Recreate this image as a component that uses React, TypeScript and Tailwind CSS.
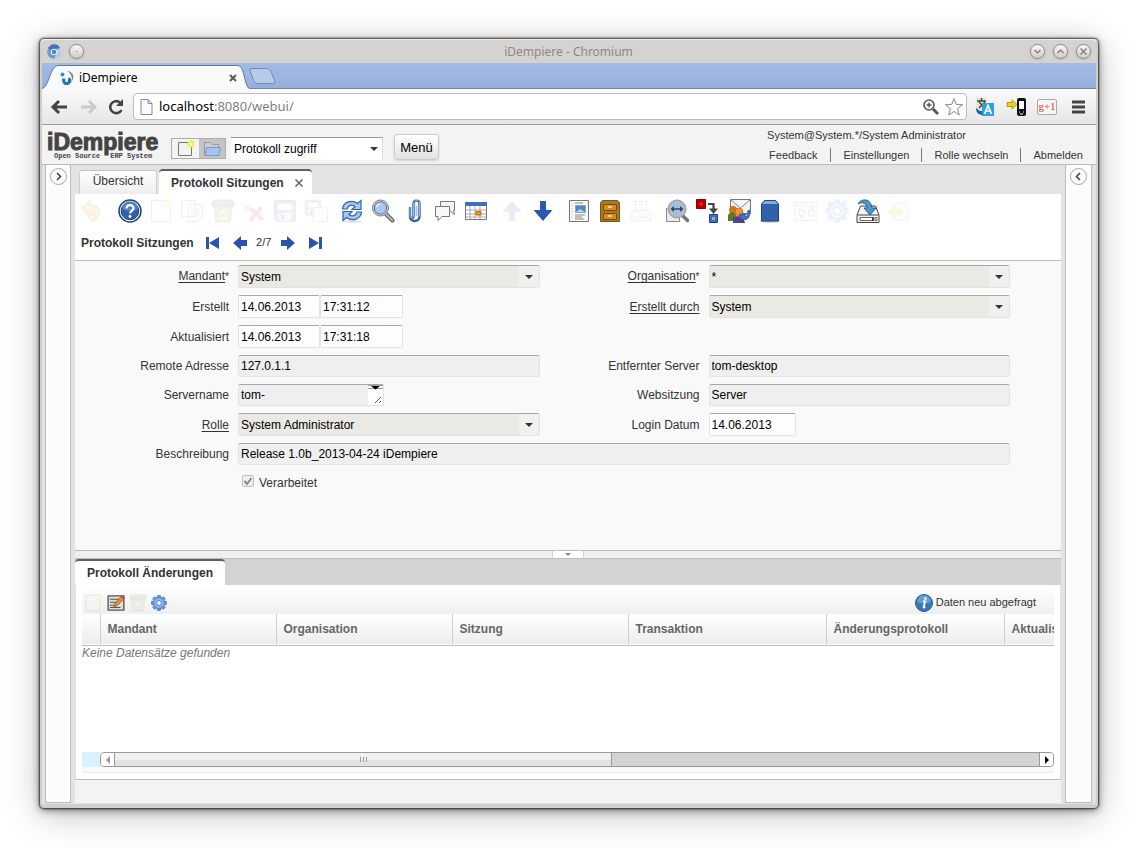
import type { ReactNode } from "react";

type IconProps = { children: ReactNode; dim?: boolean };

function Pic({ children, dim }: IconProps) {
  return (
    <svg viewBox="0 0 24 24" aria-hidden="true" className={dim ? "size-6 shrink-0 opacity-10" : "size-6 shrink-0"}>
      {children}
    </svg>
  );
}

const arrowRight = "M2 9h9V2.500l11 9.500-11 9.500V15H2z";

const page = <path d="M2.500 1.500h19v21h-19z" fill="#f4f4f4" stroke="#777" />;
const sparkle = (
  <>
    <circle cx="19" cy="5" r="4.500" fill="#f5e50a" />
    <circle cx="19" cy="5" r="2" fill="#fff" />
  </>
);
const floppy = (
  <>
    <path d="M1.500 2.500q0-1 1-1h19q1 0 1 1v19q0 1-1 1h-17l-3-3z" fill="#5580d8" stroke="#2c4a90" />
    <path d="M5 2h14v9H5z" fill="#fff" />
    <path d="M5 2h14v2.500H5z" fill="#e02020" />
    <path d="M6 14h12v8H6z" fill="#ddd" />
    <path d="M8 15.500h3v5H8z" fill="#444" />
  </>
);
const bin = (
  <>
    <path d="M3 7h18l-1.500 16h-15z" fill="#8fa848" stroke="#5e7a22" />
    <path d="M1.500 2.500q0-1.500 2-1.500h17q2 0 2 1.500V7h-21z" fill="#6a6f55" stroke="#3c4430" />
    <path d="M9 16l3-5 3 5m-7 3h8" fill="none" stroke="#fff" strokeWidth="1.500" />
  </>
);
const gearTeeth = [0, 45, 90, 135, 180, 225, 270, 315];
const gear = (
  <>
    {gearTeeth.map((a) => (
      <rect key={a} x="9.500" y="0.800" width="5" height="6" rx="1" fill="#6d9ee4" stroke="#2a62b8" transform={`rotate(${a} 12 12)`} />
    ))}
    <circle cx="12" cy="12" r="8" fill="#8db4ee" stroke="#2a62b8" />
    <circle cx="12" cy="12" r="7.200" fill="#8db4ee" />
    <circle cx="12" cy="12" r="3.500" fill="#fff" stroke="#2a62b8" />
  </>
);

type Tool = { name: string; dim?: boolean; art: ReactNode };

const toolGroups: Tool[][] = [
  [
    {
      name: "Zurücknehmen",
      dim: true,
      art: <path d="M3 9l8-7v4c7 0 10 4 9 8-.500 4-3 7-7 8 3-4 3-8-2-8v4z" fill="#f0b000" stroke="#b08000" strokeWidth="2" />,
    },
  ],
  [
    {
      name: "Hilfe",
      art: (
        <>
          <circle cx="12" cy="12" r="11" fill="#fff" stroke="#1d4483" strokeWidth="1.500" />
          <circle cx="12" cy="12" r="8.800" fill="#2f62ab" stroke="#1d4483" />
          <path d="M4 10a8 8 0 0 1 16 0q-8 4-16 0z" fill="#6c95cf" opacity=".6" />
          <path d="M8.500 9.500c0-4.500 7-4.500 7-.300 0 2.500-3.400 2.500-3.400 5.300" fill="none" stroke="#fff" strokeWidth="2.200" />
          <circle cx="12" cy="17.500" r="1.400" fill="#fff" />
        </>
      ),
    },
    { name: "Neu", dim: true, art: <>{page}{sparkle}</> },
    {
      name: "Kopieren",
      dim: true,
      art: (
        <>
          <path d="M1.500 1.500h14v16h-14zM8.500 5.500h14v13l-4 4h-10z" fill="#f4f4f4" stroke="#777" />
          <path d="M11 10h9M11 13h9M11 16h9" stroke="#999" />
        </>
      ),
    },
    { name: "Löschen", dim: true, art: bin },
    {
      name: "Auswahl löschen",
      dim: true,
      art: (
        <>
          <path d="M8 9l13 12M20 8L8 22" stroke="#e02020" strokeWidth="3.500" />
          <path d="M2 6l6 6M8 6l-6 6" stroke="#e02020" />
        </>
      ),
    },
    { name: "Speichern", dim: true, art: floppy },
    {
      name: "Speichern und neu",
      dim: true,
      art: (
        <>
          <g transform="scale(.75)">{floppy}</g>
          <path d="M9.500 8.500h14v14h-14z" fill="#fff" stroke="#777" />
          <circle cx="21" cy="10" r="3" fill="#f5e50a" />
        </>
      ),
    },
  ],
  [
    {
      name: "Aktualisieren",
      art: (
        <>
          <ellipse cx="12" cy="22.500" rx="10" ry="1.200" fill="#ddd" />
          <path d="M2.500 10C3 3 12 0 17.500 4.500L21 1.500v9h-9l3-3C12 5 8 6 7 10z" fill="#a9c7ee" stroke="#2f64ab" strokeWidth="1.200" />
          <path d="M21.500 13C21 20 12 23 6.500 18.500L3 21.500v-9h9l-3 3c3 2.500 7 1.500 8-2.500z" fill="#a9c7ee" stroke="#2f64ab" strokeWidth="1.200" />
        </>
      ),
    },
    {
      name: "Suchen",
      art: (
        <>
          <path d="M14.500 14.500l7 7" stroke="#555" strokeWidth="4" strokeLinecap="round" />
          <path d="M14.500 14.500l7 7" stroke="#bbb" strokeWidth="2" strokeLinecap="round" />
          <circle cx="9.500" cy="9" r="8" fill="#ddd" stroke="#777" />
          <circle cx="9.500" cy="9" r="6.200" fill="#a6c8f2" stroke="#668" />
          <path d="M5 9a4.500 4.500 0 0 1 5-4.500C7 6 6 8 5 9z" fill="#fff" />
        </>
      ),
    },
    {
      name: "Anhang",
      art: (
        <>
          <path d="M8 8v9.500c0 2 3.500 2 3.500 0V5c0-4.500 6-4.500 6 0v12.500c0 6-9.500 6-9.500 0" fill="none" stroke="#2f5f9f" strokeWidth="2.400" />
          <path d="M14.500 7v10" stroke="#a9c7ee" strokeWidth="2" />
          <path d="M8 8v9.500c0 2 3.500 2 3.500 0V5c0-4.500 6-4.500 6 0v12.500" fill="none" stroke="#b5d0f0" strokeWidth=".8" />
        </>
      ),
    },
    {
      name: "Chat",
      art: (
        <>
          <path d="M7.500 2.500h14v9h-1l1 4-5-4h-9z" fill="#f3f3f3" stroke="#777" />
          <path d="M2.500 7.500h14v10H9l-4 4v-4H2.500z" fill="#f8f8f8" stroke="#777" />
        </>
      ),
    },
    {
      name: "Tabellenansicht",
      art: (
        <>
          <path d="M1.500 3.500h21v17h-21z" fill="#fff" stroke="#777" />
          <path d="M1 3h22v4H1z" fill="#3f70b8" />
          <path d="M2 11h20M2 15h20M2 18h20M6 7v13M11 7v13M16 7v13" stroke="#999" strokeWidth=".8" />
          <path d="M12 12.500h5v3.500h-5z" fill="#f59a20" stroke="#d05a00" />
        </>
      ),
    },
  ],
  [
    { name: "Übergeordnet", dim: true, art: <path d={arrowRight} fill="#2b57ae" transform="rotate(-90 12 12)" /> },
    { name: "Detail", art: <path d={arrowRight} fill="#2b57ae" transform="rotate(90 12 12)" /> },
  ],
  [
    {
      name: "Bericht",
      art: (
        <>
          <path d="M2.500 1.500h19v21h-19z" fill="#f7f7f7" stroke="#777" />
          <path d="M5 3v18" stroke="#bbb" strokeDasharray="1 2" />
          <path d="M8.500 6.500h10v7h-10z" fill="#4d87d0" stroke="#8aa" />
          <path d="M9 13l4-3 5 3z" fill="#b5d4f0" />
          <path d="M8 4h8M8 16h10M8 18h7M8 20h9" stroke="#888" />
        </>
      ),
    },
    {
      name: "Archiv",
      art: (
        <>
          <path d="M2.500 3.500l2-2h15l2 2v19h-19z" fill="#a87a20" stroke="#6b5a20" />
          <path d="M5.500 5.500h13v6h-13zM5.500 14.500h13v6h-13z" fill="#dc8a18" stroke="#7a4a00" />
          <path d="M10 8h4M10 17h4" stroke="#ffe8b8" strokeWidth="1.400" />
        </>
      ),
    },
    {
      name: "Drucken",
      dim: true,
      art: (
        <>
          <path d="M6.500 2.500h11v9h-11z" fill="#fff" stroke="#777" />
          <path d="M2 16l3-5h14l3 5v6H2z" fill="#ddd" stroke="#777" />
          <path d="M12 4v6M9.500 6.500L12 4l2.500 2.500M5 18h14" stroke="#777" fill="none" />
        </>
      ),
    },
  ],
  [
    {
      name: "Zoom",
      art: (
        <>
          <path d="M1.500 9v13.500h13V16" fill="#ececec" stroke="#888" />
          <path d="M18 17l4.500 4.500" stroke="#777" strokeWidth="3.500" strokeLinecap="round" />
          <circle cx="12" cy="10" r="9" fill="#b5b5b5" stroke="#999" />
          <circle cx="12" cy="10" r="7.500" fill="#a4bedc" />
          <path d="M5.500 10l3.500-3v2.200h6V7l3.500 3-3.500 3v-2.200H9V13z" fill="#2d4a6c" />
        </>
      ),
    },
    {
      name: "Prozess",
      art: (
        <>
          <path d="M.5.5h9v9h-9z" fill="#b80000" stroke="#800" />
          <path d="M3.500 3.500h3v3h-3z" fill="#e22" />
          <path d="M12 5h5.500v5" fill="none" stroke="#444" strokeWidth="2.200" />
          <path d="M13 9.500h9L17.500 15z" fill="#444" />
          <path d="M13.500 15.500h8v8h-8z" fill="#3f70b8" stroke="#1d4483" />
          <path d="M16 18h3v3h-3z" fill="#83aee8" />
        </>
      ),
    },
    {
      name: "Anfragen",
      art: (
        <>
          <path d="M3.500.500h20v14h-20z" fill="#f4f4f4" stroke="#777" />
          <path d="M4 1l9.500 8L23 1" fill="none" stroke="#888" />
          <circle cx="6" cy="11" r="4" fill="#d07818" />
          <path d="M1 16q4-6 8 0v6H1z" fill="#5c7a20" />
          <circle cx="12" cy="13" r="4" fill="#f59430" stroke="#a85b10" strokeWidth=".6" />
          <path d="M6 24v-5l4-2 6 1 2 6z" fill="#703080" />
          <path d="M6 24l1-5 6 5z" fill="#2b57ae" />
          <path d="M22.500 11c2 7-3 12-8 9l-1 3-1-8 7 0-2 2c3 1 4-2 3-5z" fill="#3f70c8" stroke="#1d4483" strokeWidth=".6" />
        </>
      ),
    },
    {
      name: "Produktinfo",
      art: (
        <>
          <ellipse cx="12" cy="22.200" rx="10" ry="1.500" fill="#bbb" />
          <path d="M3.500 5l3-3.500h11l3 3.500v17h-17z" fill="#2f62ab" stroke="#1d4483" />
          <path d="M4 5l3-3h10l3 3z" fill="#86acdf" />
        </>
      ),
    },
  ],
  [
    {
      name: "Anpassen",
      dim: true,
      art: (
        <>
          <path d="M1 3.500h22v18H1zM1 7h22" fill="#f8f8f8" stroke="#888" />
          <path d="M5 11h5v5H5zM15 11h5v6h-5zM6 18h4M16 9h3" fill="none" stroke="#555" />
        </>
      ),
    },
    { name: "Prozesse", dim: true, art: gear },
    {
      name: "Export",
      art: (
        <>
          <path d="M1 16l3.500-9h15l3.500 9v7.500H1z" fill="#f3f3f3" stroke="#444" />
          <path d="M1.500 16h21" stroke="#444" />
          <path d="M4 18.500h13v3H4zM19 18.500h2v3h-2z" fill="#fff" stroke="#666" />
          <path d="M17 18v4" stroke="#222" strokeWidth="1.500" />
          <path d="M2 5C5-1 15-1 16 9h4l-6 7-6-7h3c0-4-4-7-9-4z" fill="#4d97cc" stroke="#1f5f94" />
        </>
      ),
    },
    {
      name: "Import",
      dim: true,
      art: (
        <>
          <path d="M6 4h12l3 3v14H6z" fill="#eee" stroke="#999" />
          <path d="M1 12l7-6v4h7v5H8v4z" fill="#d0d800" stroke="#b0b800" />
        </>
      ),
    },
  ],
];

function Caret() {
  return (
    <svg viewBox="0 0 8 4" aria-hidden="true" className="h-1 w-2">
      <path d="M0 0h8L4 4z" fill="#333" />
    </svg>
  );
}

const edge = "border border-t-[#a8a8a8] border-x-[#e3e3e3] border-b-[#e3e3e3] rounded-[2px]";

function Combo({ id, value }: { id: string; value: string }) {
  return (
    <div className="relative h-[23px]">
      <select id={id} defaultValue={value} className={`${edge} h-full w-full appearance-none bg-[#ebe9e4] pl-[2px] pr-6 text-black`}>
        <option>{value}</option>
      </select>
      <span className="pointer-events-none absolute inset-y-px right-px flex w-5 items-center justify-center bg-[#f0f0f0]">
        <Caret />
      </span>
    </div>
  );
}

function Field({ id, value }: { id: string; value: string }) {
  return <input id={id} readOnly defaultValue={value} className={`${edge} h-[22px] w-full bg-[#efefef] px-[2px] text-black`} />;
}

function DateField({ id, value, label, width }: { id: string; value: string; label?: string; width: string }) {
  return <input id={id} aria-label={label} defaultValue={value} className={`${edge} ${width} h-[23px] bg-white/60 px-[2px] text-black`} />;
}

function Label({ id, children, link, star }: { id: string; children: ReactNode; link?: boolean; star?: boolean }) {
  return (
    <label htmlFor={id} className="self-center text-right leading-5">
      <span className={link ? "underline underline-offset-2" : ""}>{children}</span>
      {star && <span className="text-[10px]">*</span>}
    </label>
  );
}

function WindowButton({ d, label }: { d: string; label: string }) {
  return (
    <button aria-label={label} className="size-[15px] rounded-full border border-[#8d8a87] bg-linear-to-b from-[#fafafa] to-[#cfcbc8] shadow-sm">
      <svg viewBox="0 0 13 13" className="size-full">
        <path d={d} fill="none" stroke="#777" strokeWidth="1.200" />
      </svg>
    </button>
  );
}

function SideBar({ label, d }: { label: string; d: string }) {
  return (
    <aside className="flex w-[26px] shrink-0 flex-col items-center border-x border-b border-[#bdbdbd] bg-[#fcfcfc] pt-[3px] last:w-[27px]">
      <button aria-label={label} className="size-[17px] rounded-full border border-[#9fa8ae] bg-white">
        <svg viewBox="0 0 15 15" className="size-full">
          <path d={d} fill="none" stroke="#444" strokeWidth="1.600" />
        </svg>
      </button>
    </aside>
  );
}

function TitleBar() {
  return (
    <header className="flex h-6 items-center rounded-t-[4px] border-t border-[#f2f0ee] bg-[#d6d2cf] px-1">
      <div className="flex flex-1 items-center gap-[7px]">
        <svg viewBox="0 0 16 16" aria-hidden="true" className="size-4">
          <circle cx="8" cy="8" r="6.800" fill="#6a9ad4" />
          <path d="M8 8L2 4a7 7 0 0 1 12-.500L8 5z" fill="#3f74b8" />
          <path d="M8 8l6-4a7 7 0 0 1-6 11l3-6z" fill="#b2cdee" />
          <circle cx="8" cy="8" r="3.200" fill="#e6effa" />
          <circle cx="8" cy="8" r="2.200" fill="#4d84c8" />
        </svg>
        <WindowButton label="Menü des Fensters" d="M6 6.500h1" />
      </div>
      <h1 className="font-['Noto_Sans',sans-serif] text-[12px] text-[#8b8886]">iDempiere - Chromium</h1>
      <div className="flex flex-1 justify-end gap-2 pr-px">
        <WindowButton label="Minimieren" d="M3.500 5l3 3 3-3" />
        <WindowButton label="Maximieren" d="M3.500 8l3-3 3 3" />
        <WindowButton label="Schließen" d="M3.500 3.500l6 6m0-6l-6 6" />
      </div>
    </header>
  );
}

function BrowserTabs() {
  return (
    <div className="flex h-[26px] border-b border-[#6f87ae] bg-linear-to-b from-[#a4bce3] to-[#96aedb] font-['Noto_Sans',sans-serif]">
      <div className="relative h-[26px] w-[208px]">
        <svg viewBox="0 0 210 26" preserveAspectRatio="none" aria-hidden="true" className="absolute inset-0 size-full">
          <path d="M0 25.500C7 25 8 3 16 2.500h182c7 0 6 23 12 23V26H0z" fill="#fafafa" />
          <path d="M0 25.500C7 25 8 3 16 2.500h182c7 0 6 23 12 23" fill="none" stroke="#5f77a4" />
        </svg>
        <div className="relative flex h-full items-center pl-[17px] pr-2 pt-[3px] text-[12px] text-black">
          <svg viewBox="0 0 16 16" aria-hidden="true" className="mr-1 size-4">
            <circle cx="3.500" cy="4.500" r="2" fill="#18a0d8" />
            <path d="M3 8.500h3.500c-1.500 4 2 4.500 2.500 2 .500-1.500-.500-2.500 1-3 3 .500 3 5 0 7-4 1.500-7 0-7-6z" fill="#1878b8" />
            <path d="M8 1c6 .500 9 6 3.500 12C14 9 13 4 8 1z" fill="#888" />
          </svg>
          <span>iDempiere</span>
          <button aria-label="Tab schließen" className="ml-auto mr-[3px] size-3">
            <svg viewBox="0 0 12 12" className="size-full">
              <path d="M3 3l6 6m0-6L3 9" stroke="#555" strokeWidth="1.800" />
            </svg>
          </button>
        </div>
      </div>
      <button aria-label="Neuer Tab" className="-ml-px mt-[5px] h-4 w-7">
        <svg viewBox="0 0 28 16" className="size-full">
          <path d="M1.500.500h16c3 0 5 3 8 12 .500 2 0 3-2 3H9c-4 0-5-4-8-13q-.500-2 .500-2z" fill="#b6caea" stroke="#7188b4" />
        </svg>
      </button>
    </div>
  );
}

function AddressBar() {
  return (
    <div className="flex h-9 items-center border-b border-[#a0a0a0] bg-linear-to-b from-[#fafafa] to-[#e6e6e6] px-2">
      <button aria-label="Zurück" className="mr-2 size-5">
        <svg viewBox="0 0 20 20"><path d="M9 4l-6 6 6 6M3.500 10H17" fill="none" stroke="#444" strokeWidth="3" /></svg>
      </button>
      <button aria-label="Vorwärts" className="mr-2 size-5">
        <svg viewBox="0 0 20 20"><path d="M11 4l6 6-6 6M16.500 10H3" fill="none" stroke="#ccc" strokeWidth="3" /></svg>
      </button>
      <button aria-label="Neu laden" className="mr-[7px] size-5">
        <svg viewBox="0 0 20 20">
          <path d="M15.500 13A6 6 0 1 1 14 5.500" fill="none" stroke="#444" strokeWidth="2.600" />
          <path d="M17 2v7h-7z" fill="#444" />
        </svg>
      </button>
      <div className="flex h-[27px] min-w-0 flex-1 items-center rounded-[4px] border border-[#bcbcbc] bg-white pl-[6px] pr-[2px] font-['Noto_Sans',sans-serif] text-[13px]">
        <svg viewBox="0 0 13 16" aria-hidden="true" className="mr-[6px] h-4 w-[13px]">
          <path d="M1 .500h7l4 4v11H1z" fill="#fafafa" stroke="#888" />
          <path d="M8 .500v4h4" fill="none" stroke="#888" />
        </svg>
        <a href="#webui" className="flex-1 text-[#808080]"><span className="text-black">localhost</span>:8080/webui/</a>
        <button aria-label="Zoom" className="mr-1 size-[18px]">
          <svg viewBox="0 0 18 18">
            <circle cx="7" cy="7" r="5" fill="none" stroke="#555" strokeWidth="1.600" />
            <path d="M4.500 7h5M7 4.500v5" stroke="#555" strokeWidth="1.400" />
            <path d="M11 11l5 5" stroke="#555" strokeWidth="2.800" />
          </svg>
        </button>
        <button aria-label="Lesezeichen" className="size-5">
          <svg viewBox="0 0 20 20"><path d="M10 1.500l2.300 5.900 6.200.300-4.900 4 1.700 6.300-5.300-3.600L4.700 18l1.700-6.300-4.900-4 6.200-.300z" fill="#fff" stroke="#888" /></svg>
        </button>
      </div>
      <button aria-label="Übersetzen" className="ml-2 size-5">
        <svg viewBox="0 0 20 20">
          <path d="M1 1h10v12H1z" fill="#eee6c8" />
          <path d="M2 4h9M6.500 1v3M4 5l6 6M10 5l-6 6" stroke="#444" strokeWidth="1.500" />
          <path d="M1 11c0 5 3 7 7 7v-4H5z" fill="#1763b8" />
          <path d="M7 6h12v13H7z" fill="#2f9fe8" />
          <path d="M9.500 17L13 8.500l3.500 8.500M10.800 14h4.400" fill="none" stroke="#fff" strokeWidth="1.700" />
        </svg>
      </button>
      <button aria-label="An Telefon senden" className="ml-[11px] size-5">
        <svg viewBox="0 0 20 20">
          <path d="M13 1h5q2 0 2 2v14q0 2-2 2h-5q-2 0-2-2V3q0-2 2-2z" fill="#111" />
          <path d="M13 4h5v8h-5z" fill="#fff" />
          <path d="M13 15h1M17 15h1M14 17h3" stroke="#fff" />
          <path d="M1 5.500h5V3l5 4.500L6 12V9.500H1z" fill="#f5d010" stroke="#9a8000" strokeWidth=".7" />
        </svg>
      </button>
      <button aria-label="+1" className="ml-[11px] flex h-4 w-5 items-center justify-center rounded-[2px] border border-[#aaa] bg-[#f6f6f6] font-['Liberation_Serif',serif] text-[11px] text-[#d03a26]">
        g+1
      </button>
      <button aria-label="Einstellungen" className="ml-[11px] size-5">
        <svg viewBox="0 0 20 20"><path d="M4 5h13M4 10h13M4 15h13" stroke="#444" strokeWidth="3" /></svg>
      </button>
    </div>
  );
}

const links = ["Feedback", "Einstellungen", "Rolle wechseln", "Abmelden"];

function AppHeader() {
  return (
    <div className="flex h-10 items-start border-b border-[#bdbdbd] bg-[#f3f3f3] pl-[5px]">
      <div className="h-9 w-[112px] pt-[7px] font-bold text-[#444]">
        <div className="text-[23px] leading-5 [-webkit-text-stroke:1px_#444]">iDempiere</div>
        <div className="flex gap-[10px] whitespace-nowrap pl-[7px] font-['Liberation_Mono',monospace] text-[7px] leading-[8px]">
          <span>Open Source</span>
          <span>ERP System</span>
        </div>
      </div>
      <div className="ml-3 mt-[13px] flex h-[21px] w-[55px] border border-[#adadad]">
        <button aria-label="Neuer Datensatz" className="flex flex-1 items-center justify-center bg-[#f3f3f3]">
          <svg viewBox="0 0 18 18" className="size-[18px]">
            <path d="M2.500 2.500h13v13h-13z" fill="#f2f2f2" stroke="#777" />
            <circle cx="15" cy="4" r="2.500" fill="#fff" stroke="#f7ea3a" strokeWidth="2" />
          </svg>
        </button>
        <button aria-label="Öffnen" className="flex flex-1 items-center justify-center bg-[#c4c4c4]">
          <svg viewBox="0 0 20 18" className="h-[18px] w-5">
            <path d="M2.500 15V2.500h6l2 2h6V9" fill="#ccc" stroke="#999" />
            <path d="M4.500 7.500h14l-1.500 8h-14z" fill="#a6c4ea" stroke="#7a9ccc" />
          </svg>
        </button>
      </div>
      <div className="relative ml-[5px] mt-3 h-[23px] w-[152px]">
        <select aria-label="Menüsuche" defaultValue="Protokoll zugriff" className="h-full w-full appearance-none border-t border-r border-t-[#999] border-r-[#ddd] bg-white pl-[3px] pr-6 text-black">
          <option>Protokoll zugriff</option>
        </select>
        <span className="pointer-events-none absolute inset-y-0 right-[5px] flex items-center"><Caret /></span>
      </div>
      <button className="ml-[11px] mt-[9px] h-[26px] w-[45px] rounded-[3px] border border-[#ccc] bg-linear-to-b from-white to-[#e2e2e2] pt-px text-[13px] text-black shadow-sm">Menü</button>
      <div className="ml-auto pr-px pt-[3px] text-[11px] leading-[14px]">
        <div>System@System.*/System Administrator</div>
        <nav className="-ml-[11px] mt-[6px] flex">
          {links.map((l, i) => (
            <a key={l} href={`#${l}`} className={i === 0 ? "px-[13px]" : "border-l border-[#777] px-3"}>{l}</a>
          ))}
        </nav>
      </div>
    </div>
  );
}

const navArrows = {
  first: "M1 1h3v12H1zM14 1v12L4 7z",
  prev: "M8 0v4h6v6H8v4L0 7z",
  next: "M6 0v4H0v6h6v4l8-7z",
  last: "M10 1h3v12h-3zM0 1v12l10-6z",
};

function NavButton({ d, label }: { d: string; label: string }) {
  return (
    <button aria-label={label} className="size-[14px]">
      <svg viewBox="0 0 14 14"><path d={d} fill="#2b52ae" /></svg>
    </button>
  );
}

function WindowTabs() {
  return (
    <div className="flex h-[29px] items-end gap-[2px] pl-1">
      <button className="h-6 w-[78px] rounded-t-[3px] border border-b-0 border-[#d0d0d0] border-t-[#b4cbd6] bg-linear-to-b from-white to-[#ededed] pb-[3px]">Übersicht</button>
      <div className="flex h-[25px] w-[153px] items-center rounded-t-[4px] border-t-2 border-[#5f5f5f] bg-white pl-3 font-bold">
        Protokoll Sitzungen
        <button aria-label="Protokoll Sitzungen schließen" className="ml-auto mr-2 size-[10px]">
          <svg viewBox="0 0 10 10"><path d="M1.500 1.500l7 7m0-7l-7 7" stroke="#666" strokeWidth="1.600" /></svg>
        </button>
      </div>
    </div>
  );
}

function Toolbar() {
  return (
    <div className="border-b border-[#bdbdbd] bg-white">
      <div className="flex gap-3 overflow-hidden pl-1 pt-[5px]">
        {toolGroups.map((g, i) => (
          <div key={i} className={i === 0 ? "mr-[3px] flex gap-[7px]" : "flex gap-[7px]"}>
            {g.map((t) => (
              <button key={t.name} aria-label={t.name} disabled={t.dim}>
                <Pic dim={t.dim}>{t.art}</Pic>
              </button>
            ))}
          </div>
        ))}
      </div>
      <div className="flex h-[37px] items-center pb-px pl-[6px] pt-[3px]">
        <span className="mr-[11px] font-bold">Protokoll Sitzungen</span>
        <NavButton label="Erster" d={navArrows.first} />
        <span className="w-[14px]" />
        <NavButton label="Vorheriger" d={navArrows.prev} />
        <span className="w-[34px] text-center text-[11px]">2/7</span>
        <span className="flex gap-[14px]">
          <NavButton label="Nächster" d={navArrows.next} />
          <NavButton label="Letzter" d={navArrows.last} />
        </span>
      </div>
    </div>
  );
}

function Form() {
  return (
    <form className="grid grid-cols-[154px_1fr_151px_1fr] gap-x-[9px] gap-y-[7px] bg-[#f9f9f9] pb-14 pr-[51px] pt-1">
      <Label id="mandant" link star>Mandant</Label>
      <Combo id="mandant" value="System" />
      <Label id="org" link star>Organisation</Label>
      <Combo id="org" value="*" />

      <Label id="erstellt">Erstellt</Label>
      <div className="flex">
        <DateField id="erstellt" value="14.06.2013" width="w-[82px]" />
        <DateField id="erstelltZeit" label="Erstellt, Uhrzeit" value="17:31:12" width="w-[83px]" />
      </div>
      <Label id="durch" link>Erstellt durch</Label>
      <Combo id="durch" value="System" />

      <Label id="akt">Aktualisiert</Label>
      <div className="col-span-3 flex">
        <DateField id="akt" value="14.06.2013" width="w-[82px]" />
        <DateField id="aktZeit" label="Aktualisiert, Uhrzeit" value="17:31:18" width="w-[83px]" />
      </div>

      <Label id="remote">Remote Adresse</Label>
      <Field id="remote" value="127.0.1.1" />
      <Label id="server">Entfernter Server</Label>
      <Field id="server" value="tom-desktop" />

      <Label id="servername">Servername</Label>
      <div className="relative h-[22px] w-[146px]">
        <textarea id="servername" readOnly defaultValue="tom-" className={`${edge} block h-full w-full resize-none overflow-hidden bg-[#efefef] px-[2px] pt-px leading-[18px] text-black`} />
        <svg viewBox="0 0 15 20" aria-hidden="true" className="absolute right-px top-px h-5 w-[15px]">
          <path d="M0 0h15v20H0z" fill="#fff" />
          <path d="M0 .500h15M0 3.500h15" stroke="#999" />
          <path d="M3 1h9L7.500 4.500z" fill="#000" />
          <path d="M7 18l6-6M11 18l2-2" stroke="#555" />
        </svg>
      </div>
      <Label id="websitzung">Websitzung</Label>
      <Field id="websitzung" value="Server" />

      <Label id="rolle" link>Rolle</Label>
      <Combo id="rolle" value="System Administrator" />
      <Label id="login">Login Datum</Label>
      <DateField id="login" value="14.06.2013" width="w-[87px]" />

      <Label id="beschreibung">Beschreibung</Label>
      <div className="col-span-3">
        <Field id="beschreibung" value="Release 1.0b_2013-04-24 iDempiere" />
      </div>

      <div className="col-span-3 col-start-2 flex h-[22px] items-center gap-[5px] pl-1">
        <span className="relative -mt-1 size-3">
          <input id="verarbeitet" type="checkbox" defaultChecked className="block size-3 appearance-none rounded-[2px] border border-[#c0c0c0] bg-[#eee]" />
          <svg viewBox="0 0 12 12" aria-hidden="true" className="pointer-events-none absolute inset-0 size-3">
            <path d="M2.500 6l2.500 3 4.500-6" fill="none" stroke="#888" strokeWidth="2" />
          </svg>
        </span>
        <label htmlFor="verarbeitet">Verarbeitet</label>
      </div>
    </form>
  );
}

const columns = [
  { name: "Mandant", w: "w-[176px]" },
  { name: "Organisation", w: "w-[176px]" },
  { name: "Sitzung", w: "w-[176px]" },
  { name: "Transaktion", w: "w-[198px]" },
  { name: "Änderungsprotokoll", w: "w-[178px]" },
  { name: "Aktualisiert", w: "w-[176px]" },
];

const small = "size-[18px]";

function Detail() {
  return (
    <section className="flex flex-1 flex-col">
      <div className="flex h-[27px] items-end border-t border-[#bdbdbd] bg-[#d3d3d3]">
        <button className="h-[26px] rounded-t-[4px] border-t-2 border-[#5f5f5f] bg-white px-3 font-bold">Protokoll Änderungen</button>
      </div>
      <div className="mx-px flex flex-1 flex-col bg-white px-[6px] pb-[6px]">
        <div className="flex h-[29px] items-center gap-1 bg-linear-to-b from-white to-[#f0f0f0] pl-[2px] pt-[6px]">
          <button aria-label="Neu" disabled className="opacity-20">
            <svg viewBox="0 0 24 24" className={small}>{page}{sparkle}</svg>
          </button>
          <button aria-label="Bearbeiten" className="ml-[1px]">
            <svg viewBox="0 0 24 24" className={small}>
              <path d="M1.500 2.500h21v19h-21z" fill="#ddd" stroke="#555" strokeWidth="1.800" />
              <path d="M4 7h12M4 11h10M4 15h6M4 18h14" stroke="#555" strokeWidth="1.600" />
              <path d="M9 18l2-6 8-9 4 3-9 9z" fill="#e89030" stroke="#8a5010" />
              <path d="M18 4l2-2 4 3-2 2z" fill="#d04070" />
            </svg>
          </button>
          <button aria-label="Löschen" disabled className="opacity-10">
            <svg viewBox="0 0 24 24" className={small}>{bin}</svg>
          </button>
          <button aria-label="Prozess">
            <svg viewBox="0 0 24 24" className="size-4">{gear}</svg>
          </button>
          <div className="ml-auto flex items-center gap-[3px] pr-[18px] text-[11px]">
            <svg viewBox="0 0 18 18" aria-hidden="true" className={small}>
              <circle cx="9" cy="9" r="8.500" fill="#3a78b4" stroke="#285f98" />
              <path d="M2 8a7 7 0 0 1 14 0q-7 3-14 0z" fill="#7cabd8" opacity=".7" />
              <path d="M8 7.500h2.200L8.500 13q0 1 1.800 0" fill="none" stroke="#fff" strokeWidth="1.800" />
              <circle cx="10.300" cy="4.600" r="1.300" fill="#fff" />
            </svg>
            <span>Daten neu abgefragt</span>
          </div>
        </div>
        <div className="overflow-hidden">
          <table className="w-[1098px] table-fixed border-collapse">
            <thead>
              <tr className="h-[31px] border-b border-[#bdbdbd] bg-linear-to-b from-white to-[#ededed] text-left text-[#666]">
                <th className="w-[18px] border-r border-[#cfcfcf]" />
                {columns.map((c) => (
                  <th key={c.name} className={`${c.w} border-r border-[#cfcfcf] px-[7px]`}>{c.name}</th>
                ))}
              </tr>
            </thead>
            <tbody>
              <tr><td colSpan={7} className="h-4 italic leading-[14px] text-[#777]">Keine Datensätze gefunden</td></tr>
            </tbody>
          </table>
        </div>
        <div className="mt-auto flex h-[21px] items-start border-b border-[#ececec] bg-[#f9f9f9]">
          <span className="h-[15px] w-[18px] bg-[#d8f2ff]" />
          <div className="flex h-[15px] flex-1 overflow-hidden rounded-[4px] border border-[#999] bg-[#d3d3d3]">
            <button aria-label="Nach links" className="flex w-[14px] items-center justify-center border-r border-[#999] bg-white">
              <svg viewBox="0 0 4 8" className="h-2 w-1"><path d="M4 0v8L0 4z" fill="#999" /></svg>
            </button>
            <div className="flex w-[497px] items-center justify-center gap-[2px] border-r border-[#999] bg-linear-to-b from-[#f0f0f0] from-50% to-[#e2e2e2] to-50%">
              <i className="h-[5px] w-px bg-[#999]" />
              <i className="h-[5px] w-px bg-[#999]" />
              <i className="h-[5px] w-px bg-[#999]" />
            </div>
            <button aria-label="Nach rechts" className="ml-auto flex w-[14px] items-center justify-center border-l border-[#999] bg-white">
              <svg viewBox="0 0 4 8" className="h-2 w-1"><path d="M0 0v8l4-4z" fill="#000" /></svg>
            </button>
          </div>
        </div>
      </div>
    </section>
  );
}

export default function App() {
  return (
    <div className="flex min-h-screen bg-white px-10 pb-10 pt-[39px] font-['Liberation_Sans',Arial,sans-serif] text-[12px] text-[#333]">
      <div className="flex min-w-0 flex-1 flex-col rounded-[4px] border-x-2 border-b-4 border-[#d2cecb] bg-[#e3e3e3] shadow-[0_0_2px_1px_rgba(0,0,0,0.7),0_2px_8px_rgba(0,0,0,0.5),0_6px_36px_rgba(0,0,0,0.25)]">
        <TitleBar />
        <BrowserTabs />
        <AddressBar />
        <AppHeader />
        <div className="flex flex-1 gap-1 pb-px pl-[3px] pr-1">
          <SideBar label="Linke Leiste öffnen" d="M6 4l3.500 3.500L6 11" />
          <main className="flex min-w-0 flex-1 flex-col">
            <WindowTabs />
            <Toolbar />
            <Form />
            <div className="flex h-2 justify-center border-t border-[#bdbdbd] bg-[#efefef]">
              <button aria-label="Detailbereich einklappen" className="flex w-8 items-center justify-center border-x border-[#d0d0d0] bg-white">
                <svg viewBox="0 0 6 3" className="h-[3px] w-[6px]"><path d="M0 0h6L3 3z" fill="#888" /></svg>
              </button>
            </div>
            <Detail />
            <footer className="h-6 border-t border-[#bdbdbd] bg-[#f3f3f3]" />
          </main>
          <SideBar label="Rechte Leiste öffnen" d="M9 4L5.500 7.500 9 11" />
        </div>
      </div>
    </div>
  );
}
